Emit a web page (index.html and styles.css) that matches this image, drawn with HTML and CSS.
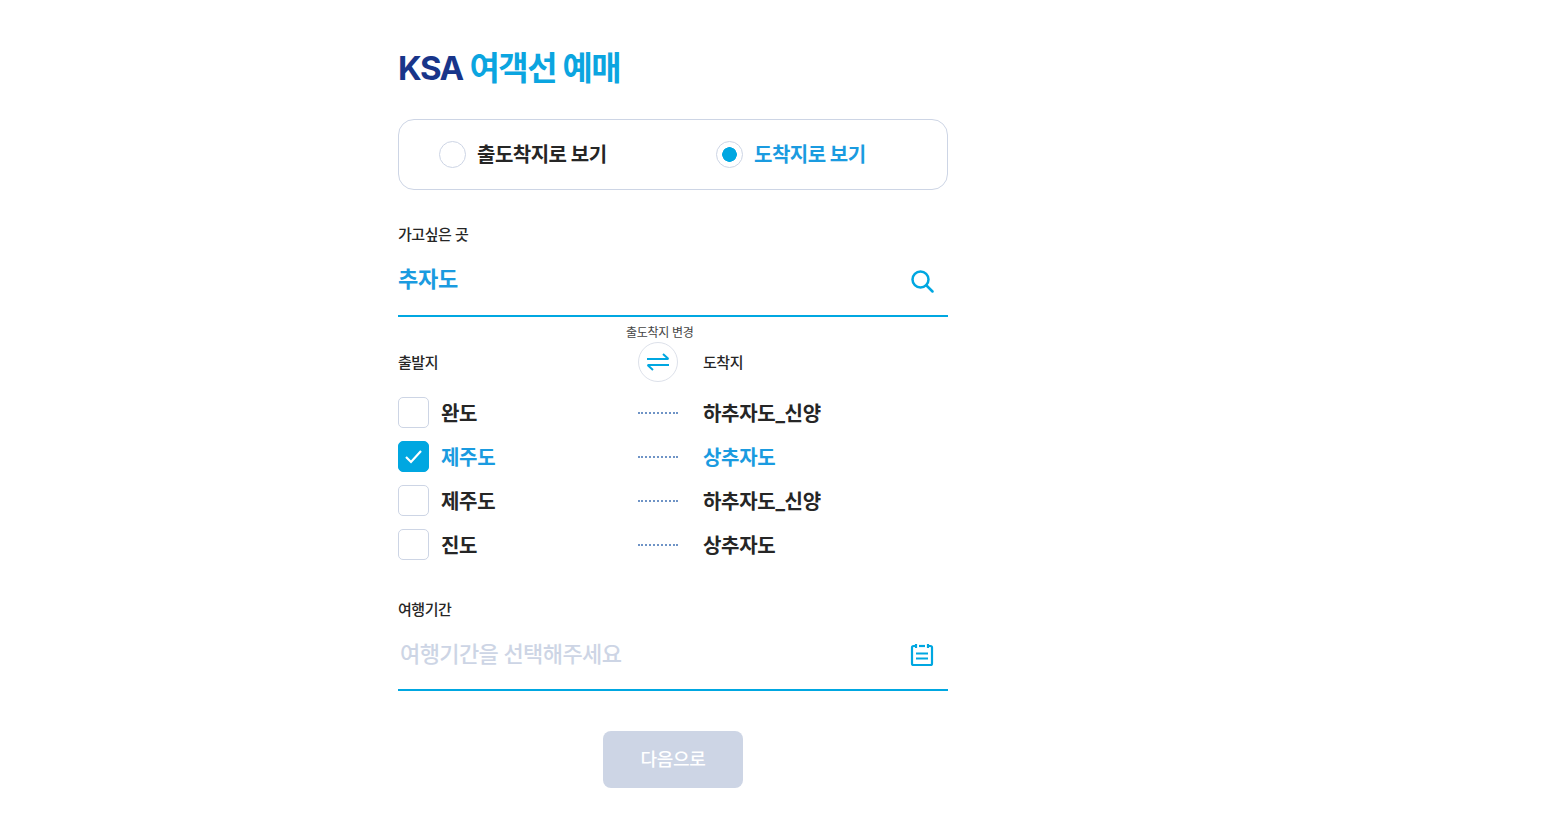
FILE: index.html
```html
<!DOCTYPE html>
<html lang="ko">
<head>
    <meta charset="UTF-8">
    <meta name="viewport" content="width=device-width, initial-scale=1.0">
    <title>KSA 여객선 예매</title>
    <link rel="stylesheet" href="styles.css">
</head>
<body>
    <div class="wrap">
        <h1 class="title"><span class="title-en">KSA</span> 여객선 예매</h1>

        <!-- 보기 선택 -->
        <div class="view-box">
            <div class="radio-item">
                <span class="radio"></span>
                <span class="radio-text">출도착지로 보기</span>
            </div>
            <div class="radio-item on">
                <span class="radio"></span>
                <span class="radio-text">도착지로 보기</span>
            </div>
        </div>

        <div class="label label-place">가고싶은 곳</div>
        <div class="field field-place">
            <span class="field-value">추자도</span>
            <svg class="field-icon" width="24" height="24" viewBox="0 0 24 24" fill="none" stroke="#00a7e1" stroke-width="2.5" stroke-linecap="round">
                <circle cx="10.500" cy="10.500" r="8"/>
                <path d="M16.500 16.500L22.500 22.500"/>
            </svg>
        </div>

        <div class="route-head">
            <div class="label">출발지</div>
            <div class="swap">
                <span class="swap-text">출도착지 변경</span>
                <span class="swap-btn">
                    <svg width="24" height="18" viewBox="0 0 24 18" fill="none" stroke="#00a7e1" stroke-width="2">
                        <path d="M1 6H22.500M17 1L22.500 6"/>
                        <path d="M23 12H1.500M7 17L1.500 12"/>
                    </svg>
                </span>
            </div>
            <div class="label">도착지</div>
        </div>

        <ul class="route-list">
            <li class="route">
                <span class="check"></span>
                <span class="route-from">완도</span>
                <span class="route-dots"></span>
                <span class="route-to">하추자도_신양</span>
            </li>
            <li class="route on">
                <span class="check">
                    <svg width="19" height="15" viewBox="0 0 19 15" fill="none" stroke="#fff" stroke-width="2.2"><path d="M2 8L7 13L17 2"/></svg>
                </span>
                <span class="route-from">제주도</span>
                <span class="route-dots"></span>
                <span class="route-to">상추자도</span>
            </li>
            <li class="route">
                <span class="check"></span>
                <span class="route-from">제주도</span>
                <span class="route-dots"></span>
                <span class="route-to">하추자도_신양</span>
            </li>
            <li class="route">
                <span class="check"></span>
                <span class="route-from">진도</span>
                <span class="route-dots"></span>
                <span class="route-to">상추자도</span>
            </li>
        </ul>

        <div class="label label-date">여행기간</div>
        <div class="field field-date">
            <span class="field-holder">여행기간을 선택해주세요</span>
            <svg class="field-icon" width="24" height="24" viewBox="0 0 24 24" fill="none" stroke="#00a7e1" stroke-width="2.2">
                <path d="M6 3H3.500C2.500 3 2 3.500 2 4.500V20.500C2 21.500 2.500 22 3.500 22H20.500C21.500 22 22 21.500 22 20.500V4.500C22 3.500 21.500 3 20.500 3H18"/>
                <path d="M9 3H15"/>
                <path d="M6 1V5M18 1V5"/>
                <path d="M6 10.500H18M6 15.500H18"/>
            </svg>
        </div>

        <div class="btn-area">
            <button class="btn-next" type="button">다음으로</button>
        </div>
    </div>
</body>
</html>
```

FILE: styles.css
```css
* {
    margin: 0;
    padding: 0;
    box-sizing: border-box;
}

body {
    background: #fff;
    color: #262626;
    font-family: "Inter", "Noto Sans CJK KR", sans-serif;
}

.wrap {
    width: 550px;
    margin-left: 398px;
    padding-top: 44px;
}

.title {
    height: 48px;
    line-height: 48px;
    font-size: 33px;
    font-weight: 700;
    letter-spacing: -1.5px;
    color: #0ba5e0;
}

.title-en {
    margin-right: 0.5px;
    color: #18358a;
}

.view-box {
    display: flex;
    align-items: center;
    height: 71px;
    margin-top: 27px;
    padding-left: 40px;
    border: 1px solid #cdd5e5;
    border-radius: 16px;
}

.radio-item {
    display: flex;
    align-items: center;
    flex: 0 0 277px;
    font-size: 20px;
    font-weight: 700;
    letter-spacing: -0.5px;
}

.radio {
    width: 27px;
    height: 27px;
    margin-right: 11px;
    border: 1px solid #cdd5e5;
    border-radius: 50%;
    flex-shrink: 0;
}

.radio-text {
    padding-bottom: 2px;
}

.radio-item.on {
    color: #1a9be0;
}

.radio-item.on .radio {
    background: radial-gradient(circle, #00a7e1 0, #00a7e1 7px, #fff 7.600px);
}

.label {
    font-size: 15px;
    font-weight: 500;
    line-height: 20px;
    letter-spacing: -0.45px;
}

.label-place {
    margin-top: 35px;
}

.field {
    display: flex;
    align-items: center;
    justify-content: space-between;
    padding-right: 14px;
    border-bottom: 2px solid #00a7e1;
}

.field-place {
    height: 72px;
}

.field-place .field-icon {
    margin-top: 2px;
}

.field-date {
    height: 71px;
}

.field-value {
    margin-top: -6px;
    font-size: 22px;
    font-weight: 700;
    letter-spacing: -0.3px;
    color: #1a9be0;
}

.field-holder {
    margin: -5px 0 0 2px;
    font-size: 22px;
    font-weight: 500;
    letter-spacing: -0.6px;
    color: #cdd5e5;
}

.route-head {
    display: grid;
    grid-template-columns: 215px 40px 1fr;
    column-gap: 25px;
    align-items: center;
    height: 40px;
    margin-top: 25px;
}

.route-head .label {
    padding-top: 1px;
    height: 21px;
}

.swap {
    position: relative;
}

.swap-text {
    position: absolute;
    top: -17px;
    left: -12px;
    font-size: 12px;
    line-height: 16px;
    white-space: nowrap;
    letter-spacing: -0.3px;
    color: #444;
}

.swap-btn {
    display: flex;
    align-items: center;
    justify-content: center;
    width: 40px;
    height: 40px;
    border: 1px solid #dde1ea;
    border-radius: 50%;
}

.route-list {
    margin-top: 14px;
    list-style: none;
}

.route {
    display: grid;
    grid-template-columns: 31px 185px 40px 1fr;
    column-gap: 12px;
    align-items: center;
    height: 32px;
    margin-bottom: 12px;
    font-size: 20px;
    font-weight: 700;
    letter-spacing: -0.3px;
}

.route-to {
    margin-left: 13px;
}

.check {
    display: flex;
    align-items: center;
    justify-content: center;
    width: 31px;
    height: 31px;
    border: 1px solid #cdd5e5;
    border-radius: 5px;
}

.route-dots {
    margin-top: 2px;
    border-top: 2px dotted #6f94c6;
}

.route.on {
    color: #1a9be0;
}

.route.on .check {
    border-color: #00a7e1;
    background: #00a7e1;
}

.label-date {
    margin-top: 40px;
}

.btn-area {
    display: flex;
    justify-content: center;
    margin-top: 40px;
}

.btn-next {
    width: 140px;
    height: 57px;
    padding-bottom: 4px;
    border: 0;
    border-radius: 8px;
    background: #cdd5e5;
    color: #fff;
    font-family: inherit;
    font-size: 18px;
    font-weight: 500;
    letter-spacing: -0.3px;
}
```
